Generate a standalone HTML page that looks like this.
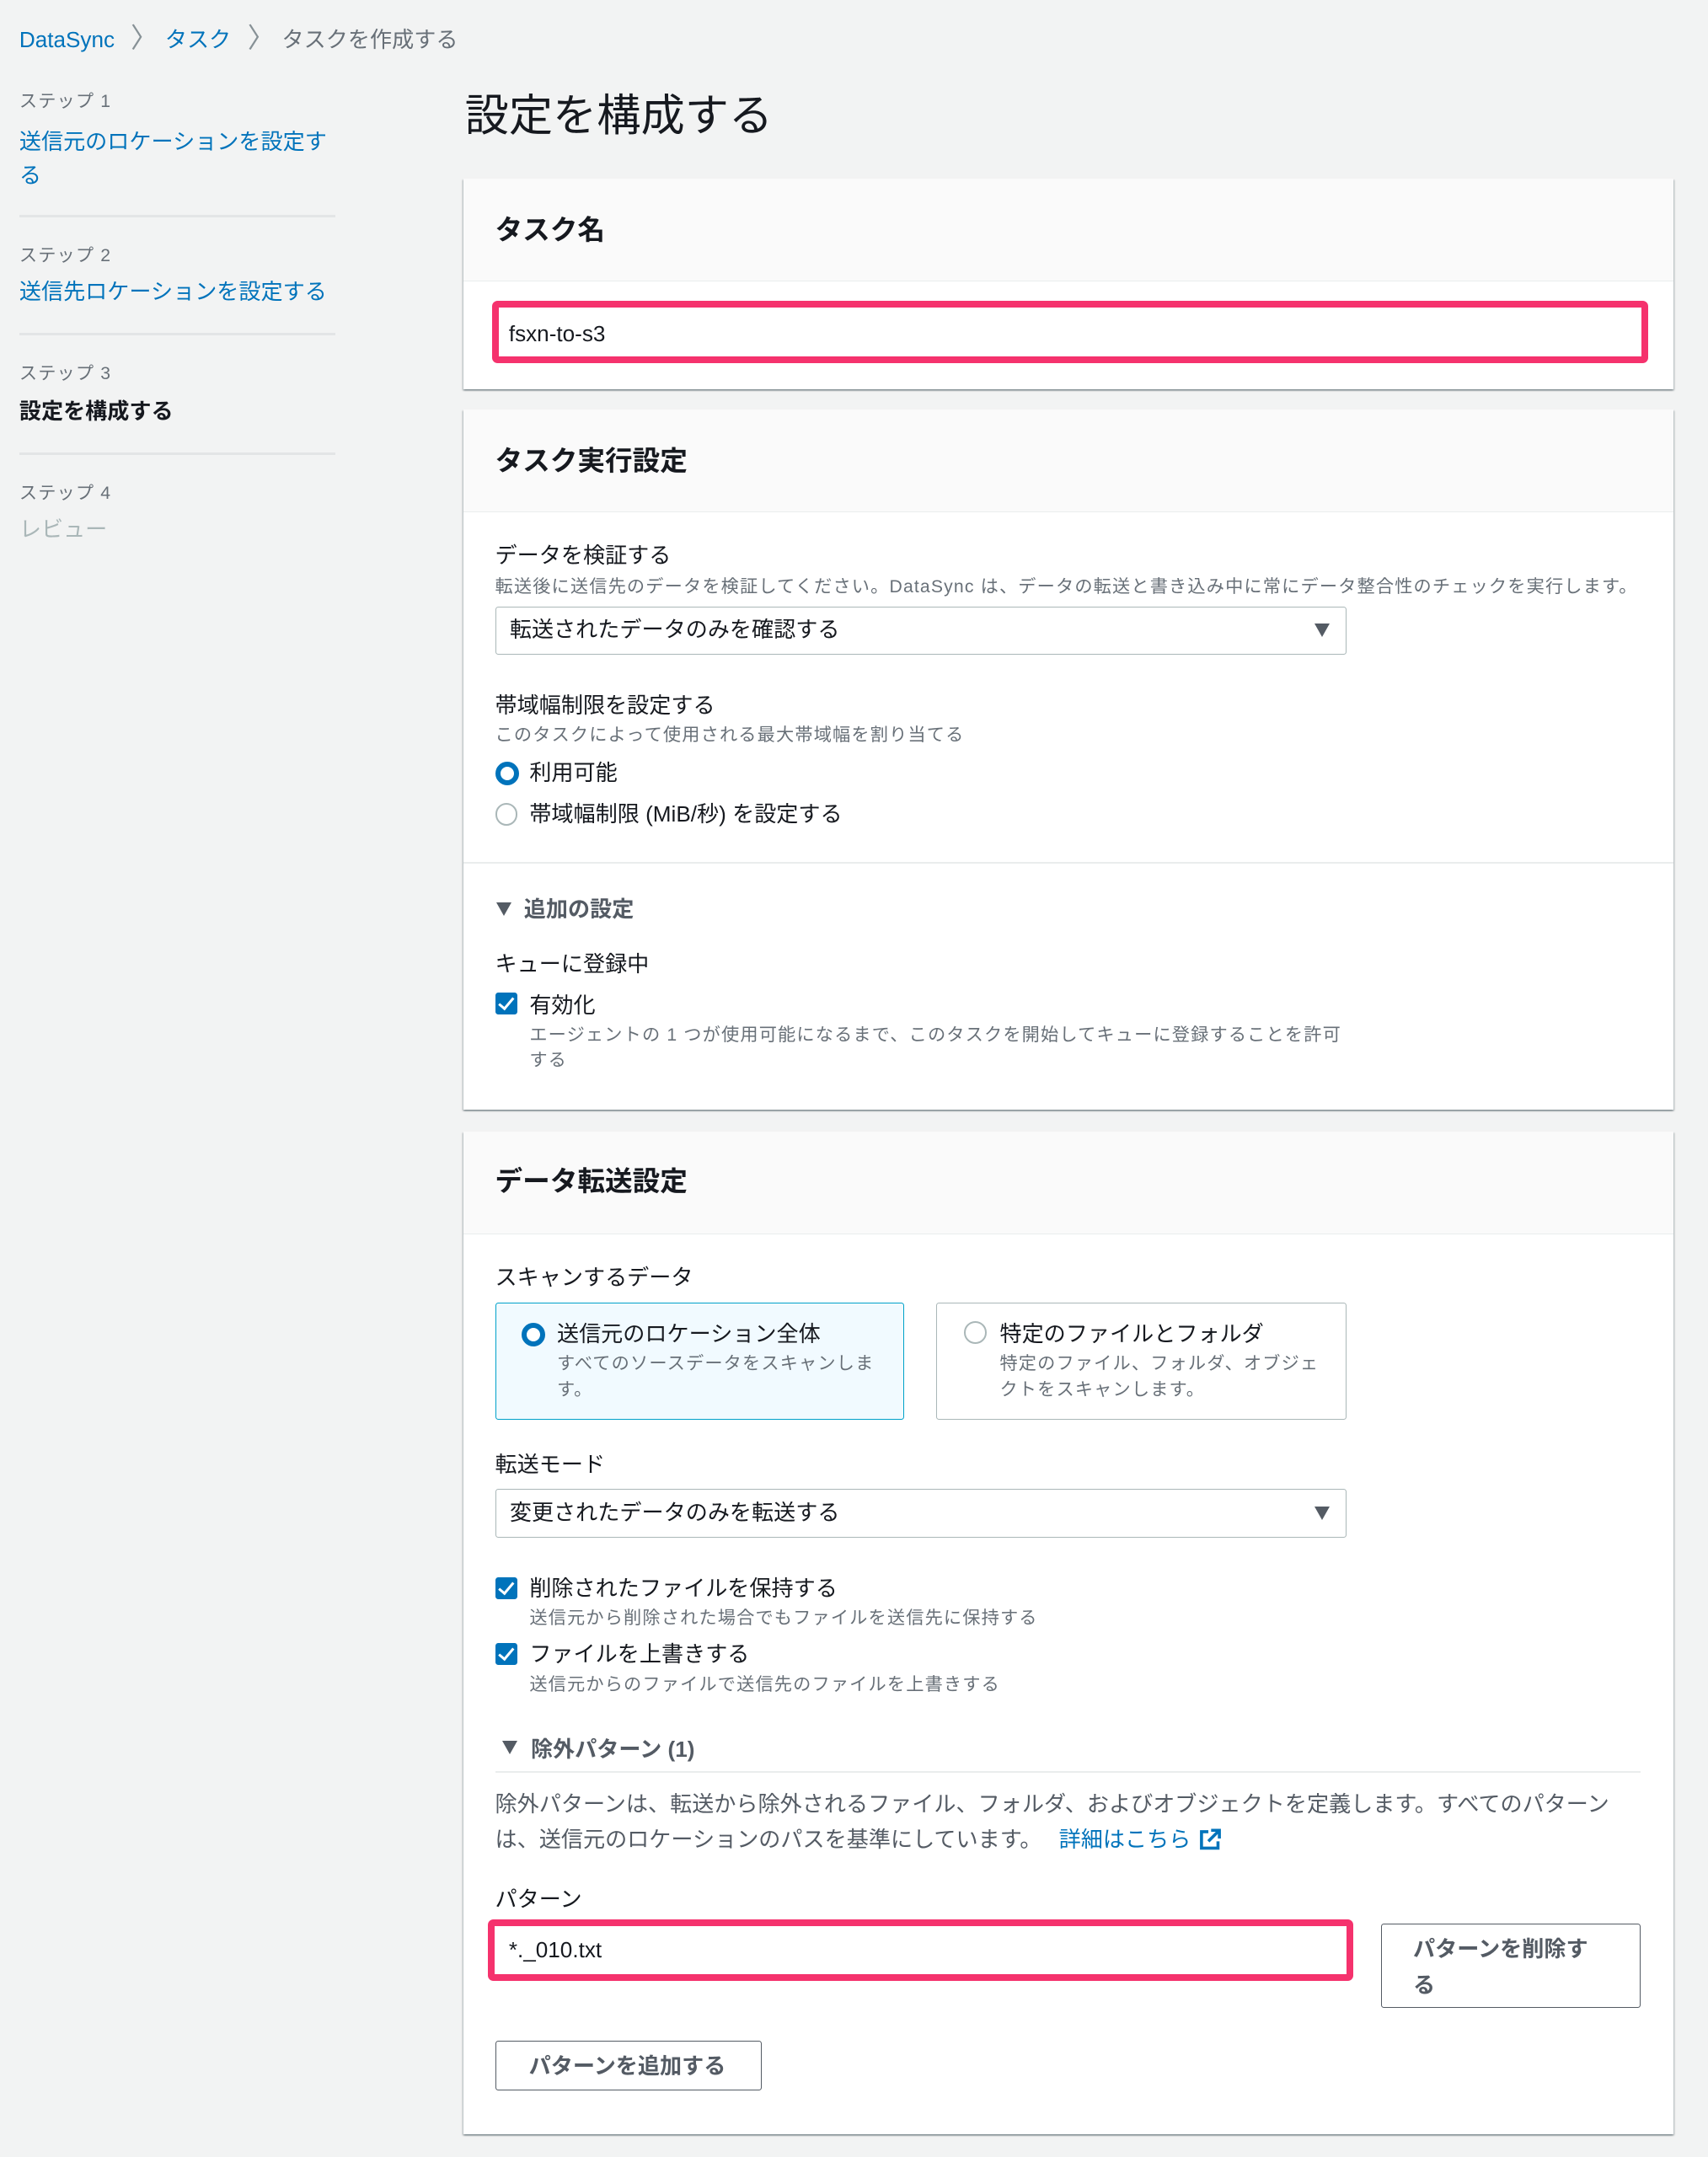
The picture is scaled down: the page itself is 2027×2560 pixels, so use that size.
<!DOCTYPE html>
<html><head><meta charset="utf-8">
<style>
html,body{margin:0;padding:0;background:#f2f3f3;}
body{width:2027px;height:2560px;overflow:hidden;}
#w{zoom:1.632;position:relative;width:1242px;height:1568px;font-family:"Liberation Sans","Noto Sans CJK JP",sans-serif;color:#16191f;}
.a{position:absolute;white-space:nowrap;}
.s13{font-size:13px;line-height:18px;color:#687078;letter-spacing:0.7px;padding-top:1px;}
.s16{font-size:16px;line-height:22px;padding-top:1.5px;}
.blue{color:#0073bb;}
.b{font-weight:bold;}
.card{position:absolute;left:337px;width:880px;background:#fff;box-shadow:0 1px 1px 0 rgba(0,28,36,.3),1px 1px 1px 0 rgba(0,28,36,.15),-1px 1px 1px 0 rgba(0,28,36,.15);}
.hdr{position:absolute;left:0;top:0;width:880px;background:#fafafa;border-bottom:1px solid #eaeded;}
.sel{position:absolute;left:360px;width:618px;height:34px;border:1px solid #aab7b8;border-radius:2px;background:#fff;}
.sel span{position:absolute;left:10px;top:6px;font-size:16px;line-height:22px;}
.sel i{position:absolute;right:12px;top:12px;width:0;height:0;border-left:6px solid transparent;border-right:6px solid transparent;border-top:10px solid #545b64;}
.rad{position:absolute;width:10px;height:10px;border-radius:50%;border:4px solid #0073bb;background:#fff;}
.radoff{position:absolute;width:14px;height:14px;border-radius:50%;border:1.5px solid #aab7b8;background:#fff;}
.chk{position:absolute;width:16px;height:16px;border-radius:2px;background:#0073bb;}
.chk:after{content:"";position:absolute;left:5px;top:1px;width:4px;height:9px;border:solid #fff;border-width:0 2px 2px 0;transform:rotate(40deg);}
.tri{position:absolute;width:0;height:0;border-left:6px solid transparent;border-right:6px solid transparent;border-top:10px solid #545b64;}
.div{position:absolute;height:2px;background:#e3e5e6;}
.red{position:absolute;border:5px solid #f5326d;border-radius:4px;background:#fff;}
.btn{position:absolute;border:1px solid #545b64;border-radius:2px;background:#fff;color:#545b64;font-weight:bold;font-size:16px;line-height:26px;}
</style></head><body><div id="w">

<div class="a s16 blue" style="left:14px;top:17px;">DataSync</div>
<div class="a" style="left:95px;top:15px;font-size:20px;color:#879196;line-height:26px;">〉</div>
<div class="a s16 blue" style="left:120px;top:17px;">タスク</div>
<div class="a" style="left:180px;top:15px;font-size:20px;color:#879196;line-height:26px;">〉</div>
<div class="a s16" style="left:205px;top:17px;color:#687078;">タスクを作成する</div>

<div class="a s13" style="left:14px;top:64px;">ステップ 1</div>
<div class="a s16 blue" style="left:14px;top:89px;line-height:25px;white-space:normal;width:232px;">送信元のロケーションを設定する</div>
<div class="div" style="left:14px;top:156px;width:230px;"></div>
<div class="a s13" style="left:14px;top:176px;">ステップ 2</div>
<div class="a s16 blue" style="left:14px;top:200px;">送信先ロケーションを設定する</div>
<div class="div" style="left:14px;top:242px;width:230px;"></div>
<div class="a s13" style="left:14px;top:262px;">ステップ 3</div>
<div class="a s16 b" style="left:14px;top:287px;">設定を構成する</div>
<div class="div" style="left:14px;top:329px;width:230px;"></div>
<div class="a s13" style="left:14px;top:349px;">ステップ 4</div>
<div class="a s16" style="left:14px;top:373px;color:#aab7b8;">レビュー</div>

<div class="a" style="left:338px;top:65px;font-size:32px;line-height:40px;">設定を構成する</div>

<!-- card 1 -->
<div class="card" style="top:130px;height:153px;">
  <div class="hdr" style="height:74px;"></div>
  <div class="a b" style="left:23px;top:23px;font-size:20px;line-height:28px;">タスク名</div>
  <div class="red" style="left:21px;top:89px;width:831px;height:35px;"></div>
  <div class="a s16" style="left:33px;top:101px;">fsxn-to-s3</div>
</div>

<!-- card 2 -->
<div class="card" style="top:298px;height:509px;">
  <div class="hdr" style="height:74px;"></div>
  <div class="a b" style="left:23px;top:23px;font-size:20px;line-height:28px;">タスク実行設定</div>
</div>
<div class="a s16" style="left:360px;top:392px;">データを検証する</div>
<div class="a s13" style="left:360px;top:417px;">転送後に送信先のデータを検証してください。DataSync は、データの転送と書き込み中に常にデータ整合性のチェックを実行します。</div>
<div class="sel" style="top:441px;"><span>転送されたデータのみを確認する</span><i></i></div>
<div class="a s16" style="left:360px;top:501px;">帯域幅制限を設定する</div>
<div class="a s13" style="left:360px;top:525px;">このタスクによって使用される最大帯域幅を割り当てる</div>
<div class="rad" style="left:360px;top:554px;"></div>
<div class="a s16" style="left:385px;top:550px;">利用可能</div>
<div class="radoff" style="left:360px;top:584px;"></div>
<div class="a s16" style="left:385px;top:580px;">帯域幅制限 (MiB/秒) を設定する</div>
<div class="div" style="left:337px;top:627px;width:880px;height:1px;background:#eaeded;"></div>
<div class="tri" style="left:361px;top:656px;"></div>
<div class="a s16 b" style="left:381px;top:649px;color:#545b64;">追加の設定</div>
<div class="a s16" style="left:360px;top:689px;">キューに登録中</div>
<div class="chk" style="left:360px;top:722px;"></div>
<div class="a s16" style="left:385px;top:719px;">有効化</div>
<div class="a s13" style="left:385px;top:743px;">エージェントの 1 つが使用可能になるまで、このタスクを開始してキューに登録することを許可</div>
<div class="a s13" style="left:385px;top:761px;">する</div>

<!-- card 3 -->
<div class="card" style="top:823px;height:729px;">
  <div class="hdr" style="height:74px;"></div>
  <div class="a b" style="left:23px;top:22px;font-size:20px;line-height:28px;">データ転送設定</div>
</div>
<div class="a s16" style="left:360px;top:917px;">スキャンするデータ</div>
<div class="a" style="left:360px;top:947px;width:296px;height:84px;border:1px solid #00a1c9;border-radius:2px;background:#f1faff;"></div>
<div class="rad" style="left:379px;top:962px;"></div>
<div class="a s16" style="left:405px;top:958px;">送信元のロケーション全体</div>
<div class="a s13" style="left:405px;top:982px;">すべてのソースデータをスキャンしま</div>
<div class="a s13" style="left:405px;top:1001px;">す。</div>
<div class="a" style="left:681px;top:947px;width:297px;height:84px;border:1px solid #aab7b8;border-radius:2px;background:#fff;"></div>
<div class="radoff" style="left:701px;top:961px;"></div>
<div class="a s16" style="left:727px;top:958px;">特定のファイルとフォルダ</div>
<div class="a s13" style="left:727px;top:982px;">特定のファイル、フォルダ、オブジェ</div>
<div class="a s13" style="left:727px;top:1001px;">クトをスキャンします。</div>
<div class="a s16" style="left:360px;top:1053px;">転送モード</div>
<div class="sel" style="top:1083px;"><span>変更されたデータのみを転送する</span><i></i></div>
<div class="chk" style="left:360px;top:1147px;"></div>
<div class="a s16" style="left:385px;top:1143px;">削除されたファイルを保持する</div>
<div class="a s13" style="left:385px;top:1167px;">送信元から削除された場合でもファイルを送信先に保持する</div>
<div class="chk" style="left:360px;top:1195px;"></div>
<div class="a s16" style="left:385px;top:1191px;">ファイルを上書きする</div>
<div class="a s13" style="left:385px;top:1215px;">送信元からのファイルで送信先のファイルを上書きする</div>
<div class="tri" style="left:365px;top:1266px;"></div>
<div class="a s16 b" style="left:386px;top:1260px;color:#545b64;">除外パターン (1)</div>
<div class="div" style="left:360px;top:1288px;width:833px;height:1px;background:#eaeded;"></div>
<div class="a s16" style="left:360px;top:1300px;color:#545b64;">除外パターンは、転送から除外されるファイル、フォルダ、およびオブジェクトを定義します。すべてのパターン</div>
<div class="a s16" style="left:360px;top:1326px;color:#545b64;">は、送信元のロケーションのパスを基準にしています。 <span class="blue" style="margin-left:8px;">詳細はこちら</span></div>
<svg class="a" style="left:871px;top:1329px;" width="18" height="18" viewBox="0 0 18 18"><path d="M8 3H3v12h12v-5" fill="none" stroke="#0073bb" stroke-width="2.2"/><path d="M10 2h6v6M16 2l-8 8" fill="none" stroke="#0073bb" stroke-width="2.2"/></svg>
<div class="a s16" style="left:360px;top:1369px;">パターン</div>
<div class="red" style="left:355px;top:1396px;width:619px;height:35px;"></div>
<div class="a s16" style="left:370px;top:1406px;">*._010.txt</div>
<div class="btn" style="left:1004px;top:1399px;width:188px;height:60px;"><div style="position:absolute;left:23px;top:5px;width:140px;">パターンを削除する</div></div>
<div class="btn" style="left:360px;top:1484px;width:193px;height:35px;"><div style="position:absolute;left:24px;top:5px;">パターンを追加する</div></div>

</div></body></html>
